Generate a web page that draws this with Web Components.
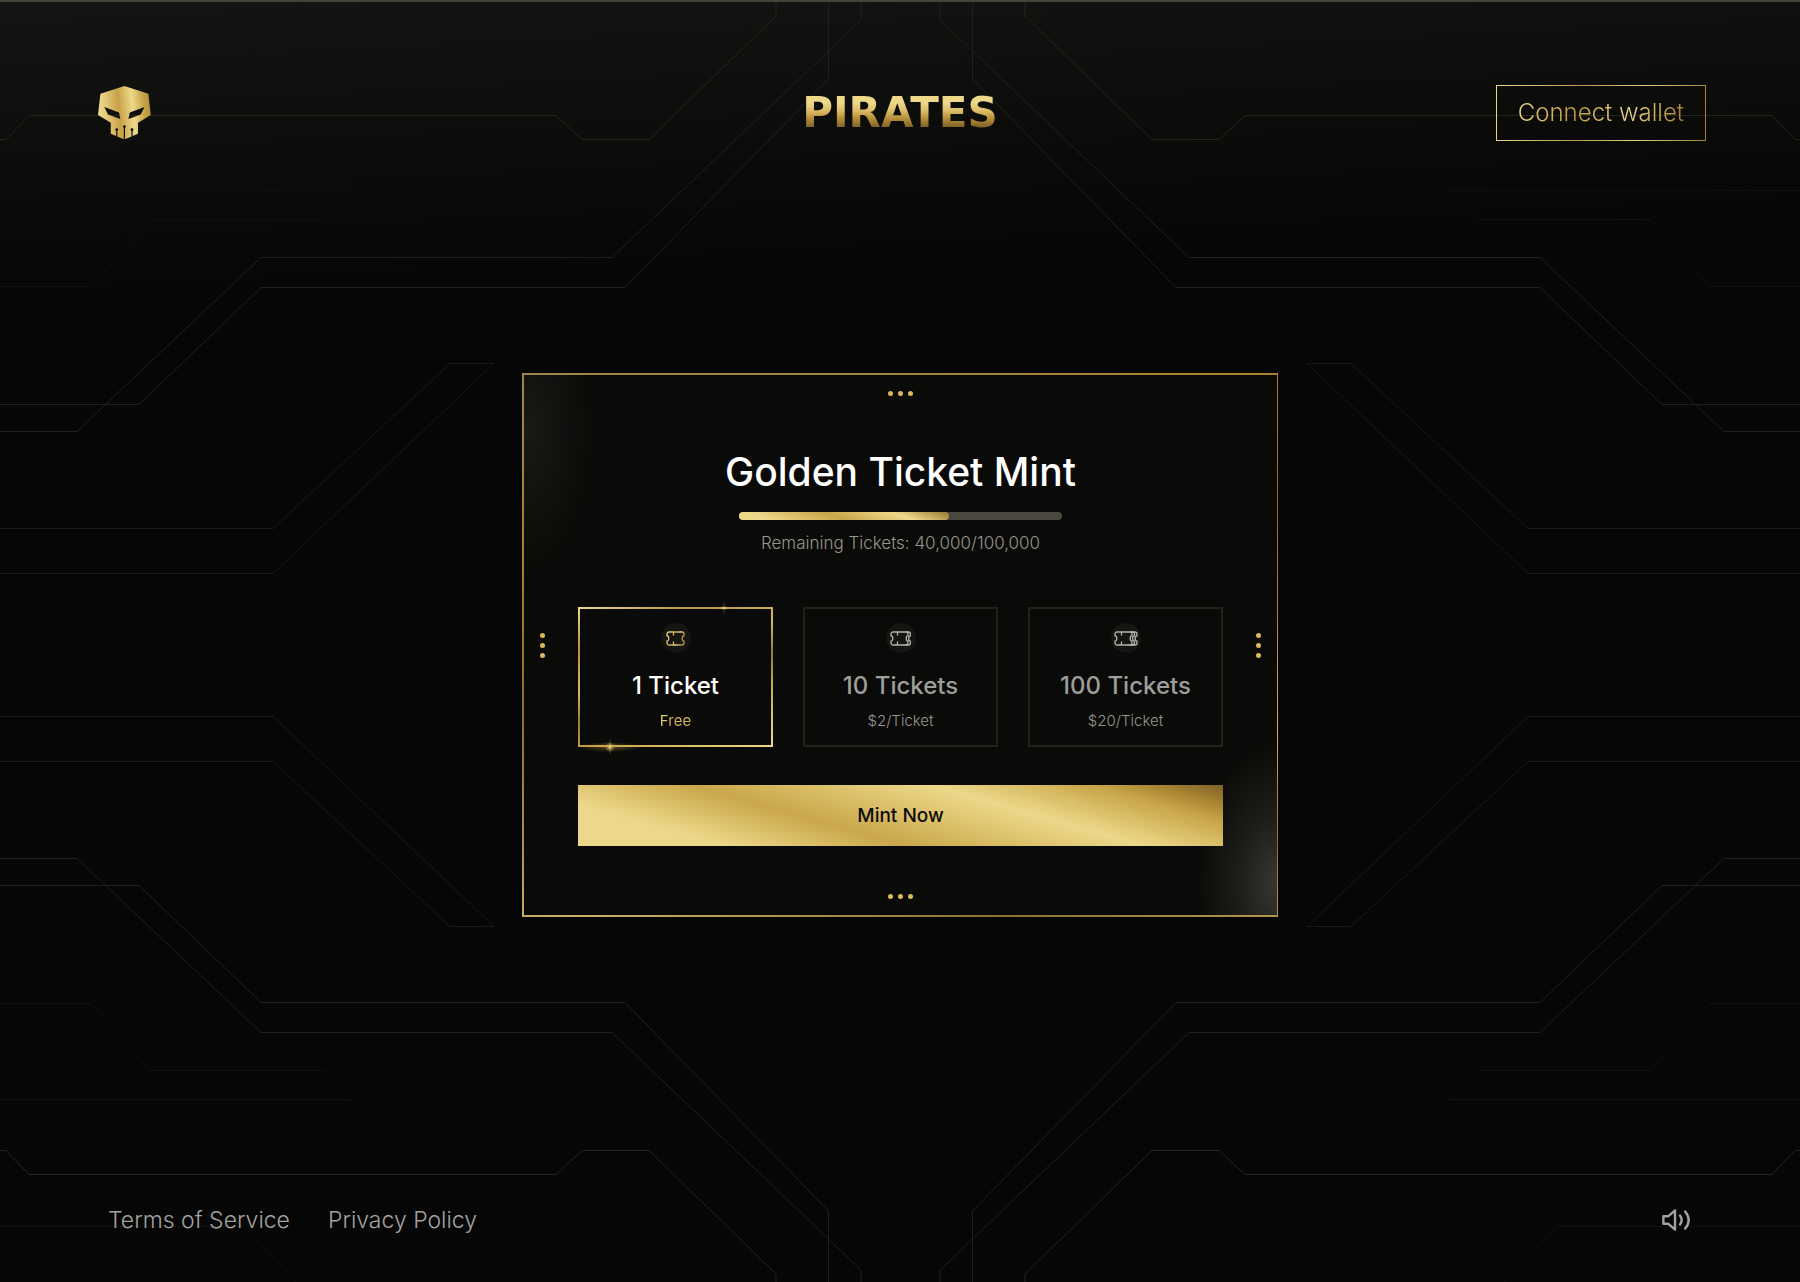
<!DOCTYPE html>
<html lang="en">
<head>
    <meta charset="UTF-8">
    <meta name="viewport" content="width=device-width, initial-scale=1">
    <title>Pirates - Golden Ticket Mint</title>
    <style>
        :root {
            --muted: #96958f;
            --gold-text: linear-gradient(100deg, #eed98b 0%, #c09a40 35%, #eed98b 65%, #a27e30 100%);
        }
        body {
            margin: 0;
            background: #060606;
            color: #fff;
            font-family: Inter, "Liberation Sans", sans-serif;
        }
    </style>
</head>
<body>

<mint-page>
    <site-header slot="header"></site-header>
    <mint-card heading="Golden Ticket Mint" sold="65">
        <span slot="remaining">Remaining Tickets: 40,000/100,000</span>
        <ticket-option name="1 Ticket" price="Free" edges="0" selected></ticket-option>
        <ticket-option name="10 Tickets" price="$2/Ticket" edges="1"></ticket-option>
        <ticket-option name="100 Tickets" price="$20/Ticket" edges="2"></ticket-option>
    </mint-card>
    <site-footer slot="footer"></site-footer>
</mint-page>

<script>
    class CircuitLines extends HTMLElement {

        constructor() {
            super();
            this._shadow = this.attachShadow({mode: "open"});
        }

        connectedCallback() {
            // one quarter is drawn, the other three are mirrored from it
            this._shadow.innerHTML = `
                <svg viewBox="0 0 1800 1282" preserveAspectRatio="xMidYMid slice" aria-hidden="true">
                    <defs>
                        <g id="quarter" fill="none">
                            <path stroke="#242421" d="M0 139.5H6L29 115.5H556L582 139.5H649L776 16V2"/>
                            <path stroke="#20201e" d="M0 431.5H77L261 257.5H612L861 20V2"/>
                            <path stroke="#20201e" d="M0 404.5H139L261 287.5H625L828.5 79V2"/>
                            <path stroke="#191917" d="M0 528.5H273L450 363.5H494L273 573.5H0"/>
                            <path stroke="#10100f" d="M0 190.5H354L323 219.5H150L92 286.5H0M0 63.5H244L302 2"/>
                        </g>
                        <g id="half">
                            <use href="#quarter"/>
                            <use href="#quarter" transform="matrix(-1 0 0 1 1801 0)"/>
                        </g>
                    </defs>
                    <use href="#half"/>
                    <use href="#half" transform="matrix(1 0 0 -1 0 1290)"/>
                </svg>

                <style>
                    :host {
                        display: block;
                        overflow: hidden;
                    }
                    svg {
                        display: block;
                        width: 100%;
                        height: 100%;
                    }
                </style>
            `;
        }
    }

    class MintPage extends HTMLElement {

        constructor() {
            super();
            this._shadow = this.attachShadow({mode: "open"});
        }

        connectedCallback() {
            this._shadow.innerHTML = `
                <circuit-lines></circuit-lines>
                <slot name="header"></slot>
                <main><slot></slot></main>
                <slot name="footer"></slot>

                <style>
                    :host {
                        display: grid;
                        grid-template-rows: 1fr auto 1fr;
                        position: relative;
                        box-sizing: border-box;
                        min-height: 100vh;
                        padding-top: 6px;
                        border-top: 2px solid #45443a;
                        background: linear-gradient(177deg, #141412 0, #0e0e0c 130px, #090908 240px, #060606 310px);
                    }
                    circuit-lines {
                        position: absolute;
                        inset: -2px 0 0;
                    }
                    main {
                        position: relative;
                        display: flex;
                        justify-content: center;
                        padding: 0 24px;
                    }
                    ::slotted(*) {
                        position: relative;
                    }
                </style>
            `;
        }
    }

    class SiteHeader extends HTMLElement {

        constructor() {
            super();
            this._shadow = this.attachShadow({mode: "open"});
        }

        connectedCallback() {
            this._shadow.innerHTML = `
                <header>
                    <a class="skull" href="#" aria-label="Home">
                        <svg width="60" height="60" viewBox="14 13 60 60">
                            <defs>
                                <linearGradient id="skull" x1="0" y1="0.1" x2="1" y2="0">
                                    <stop offset="0" stop-color="#eed98b"/>
                                    <stop offset="0.1" stop-color="#e6cd7e"/>
                                    <stop offset="0.36" stop-color="#c6a146"/>
                                    <stop offset="0.62" stop-color="#eed98b"/>
                                    <stop offset="0.82" stop-color="#caa74a"/>
                                    <stop offset="1" stop-color="#a98433"/>
                                </linearGradient>
                            </defs>
                            <path fill="url(#skull)" fill-rule="evenodd" d="M44.4 16L68.4 23.7L70.8 45L58 52.8V63.8L44.4 69.6L30.8 63.8V52.8L18 45L20.4 23.7Z
                                M24.3 37L28 44.6L40.4 49L39 42.4ZM64.5 37L60.8 44.6L48.4 49L49.8 42.4Z"/>
                            <path stroke="#0e0e0c" stroke-width="1.2" d="M36.8 60V67.5M44.4 57V70M52 60V67.5"/>
                            <g fill="#0e0e0c">
                                <circle cx="36.8" cy="59.6" r="1.4"/>
                                <circle cx="44.4" cy="56.6" r="1.4"/>
                                <circle cx="52" cy="59.6" r="1.4"/>
                            </g>
                        </svg>
                    </a>
                    <span class="brand">PIRATES</span>
                    <button><span>Connect wallet</span></button>
                </header>

                <style>
                    :host {
                        display: block;
                        padding: 75px 94px 0;
                    }
                    header {
                        display: grid;
                        grid-template-columns: 1fr auto 1fr;
                        align-items: center;
                    }
                    .skull {
                        justify-self: start;
                    }
                    svg {
                        display: block;
                    }
                    .brand {
                        font: bold 42px/42px "DejaVu Sans", sans-serif;
                        background: linear-gradient(#eed98b 25%, #dcbc68 45%, #b8913a 62%, #7a5f28 85%);
                        -webkit-background-clip: text;
                        background-clip: text;
                        color: transparent;
                    }
                    button {
                        justify-self: end;
                        padding: 12px 21px;
                        border: 1px solid;
                        border-image: linear-gradient(100deg, #eed98b, #c09a40 40%, #e6cd7e 68%, #a27e30) 1;
                        background: none;
                        font: 300 24px/30px Inter, "Liberation Sans", sans-serif;
                        cursor: pointer;
                    }
                    button span {
                        background: var(--gold-text);
                        -webkit-background-clip: text;
                        background-clip: text;
                        color: transparent;
                    }
                </style>
            `;
        }
    }

    class DotRow extends HTMLElement {

        constructor() {
            super();
            this._shadow = this.attachShadow({mode: "open"});
        }

        connectedCallback() {
            this._shadow.innerHTML = `
                <i></i><i></i><i></i>

                <style>
                    :host {
                        display: flex;
                        justify-content: center;
                        gap: 5px;
                    }
                    :host([vertical]) {
                        flex-direction: column;
                    }
                    i {
                        width: 5px;
                        height: 5px;
                        border-radius: 50%;
                        background: #dcb95e;
                    }
                </style>
            `;
        }
    }

    class MintCard extends HTMLElement {

        constructor() {
            super();
            this._shadow = this.attachShadow({mode: "open"});
        }

        connectedCallback() {
            this._shadow.innerHTML = `
                <dot-row class="wide"></dot-row>
                <dot-row vertical></dot-row>
                <section>
                    <h1>${this.getAttribute("heading")}</h1>
                    <progress max="100" value="${this.getAttribute("sold")}" aria-labelledby="remaining"></progress>
                    <p id="remaining"><slot name="remaining"></slot></p>
                    <div class="options"><slot></slot></div>
                    <button>Mint Now</button>
                </section>
                <dot-row vertical></dot-row>
                <dot-row class="wide"></dot-row>

                <style>
                    :host {
                        display: grid;
                        grid-template-columns: 5px 1fr 5px;
                        column-gap: 33px;
                        box-sizing: border-box;
                        width: 100%;
                        max-width: 756px;
                        padding: 16px;
                        border: 2px solid;
                        border-right-width: 1px;
                        border-image: linear-gradient(165deg, #9c8650 0%, #a8832f 25%, #8c6d2c 45%, #a38a4c 60%, #cdb066 75%, #8c7038 90%, #b3964e 100%) 2;
                        background:
                            radial-gradient(70px 140px at 0 55px, #191916, #11110f 55%, #0a0a0800),
                            radial-gradient(80px 140px at 100% 94%, #38362f, #1d1c18 50%, #0a0a0800),
                            #0a0a08;
                    }
                    .wide {
                        grid-column: 1 / -1;
                    }
                    section {
                        display: flex;
                        flex-direction: column;
                        align-items: center;
                        padding: 52px 0 48px;
                    }
                    h1 {
                        margin: 0;
                        font-size: 39px;
                        line-height: 48px;
                        font-weight: 500;
                    }
                    progress {
                        appearance: none;
                        -webkit-appearance: none;
                        display: block;
                        width: 50%;
                        height: 8px;
                        margin: 16px 0 12px;
                        border: none;
                        border-radius: 4px;
                        overflow: hidden;
                        background: #4b493f;
                    }
                    progress::-webkit-progress-bar {
                        background: #4b493f;
                    }
                    progress::-webkit-progress-value {
                        border-radius: 0 4px 4px 0;
                        background: linear-gradient(20deg, #eed98b 12%, #c9a648 46%, #eed98b 75%, #9a7a30 100%);
                    }
                    p {
                        margin: 0;
                        font-size: 17px;
                        line-height: 22px;
                        font-weight: 300;
                        color: var(--muted);
                    }
                    .options {
                        display: grid;
                        grid-template-columns: repeat(3, 1fr);
                        gap: 30px;
                        align-self: stretch;
                        margin: 53px 0 38px;
                    }
                    button {
                        align-self: stretch;
                        height: 61px;
                        border: none;
                        background: linear-gradient(16deg, #ecd88a 17%, #caa74a 38%, #ecd88a 66%, #caa74a 84%, #a98433 92%, #7d6128 100%);
                        color: #0c0c0a;
                        font: 500 19px/24px Inter, "Liberation Sans", sans-serif;
                        cursor: pointer;
                    }
                </style>
            `;
        }
    }

    class TicketOption extends HTMLElement {

        constructor() {
            super();
            this._shadow = this.attachShadow({mode: "open"});
        }

        connectedCallback() {
            const selected = this.hasAttribute("selected");
            const edges = Number(this.getAttribute("edges"));
            const width = 19 + edges * 2.5;

            // every extra edge is one more ticket behind the first
            let stack = "";
            for (let i = 1; i <= edges; i++) {
                stack += `<path transform="translate(${i * 2.5})" d="M13 1h3a2 2 0 0 1 2 2v1.9a1.8 2.6 0 0 0 0 5.2v1.9a2 2 0 0 1-2 2h-3"/>`;
            }

            this._shadow.innerHTML = `
                <button aria-pressed="${selected}">
                    <span class="icon">
                        <svg width="${width}" height="15" viewBox="0 0 ${width} 15" aria-hidden="true">
                            <defs>
                                <linearGradient id="gold" x1="0" y1="0" x2="1" y2="0.3">
                                    <stop offset="0" stop-color="#eed98b"/>
                                    <stop offset="0.5" stop-color="#caa74a"/>
                                    <stop offset="0.7" stop-color="#eed98b"/>
                                    <stop offset="1" stop-color="#b8913a"/>
                                </linearGradient>
                            </defs>
                            <g fill="none" stroke="${selected ? "url(#gold)" : "#b4b3ad"}" stroke-width="1.3">
                                <path d="M3 1h13a2 2 0 0 1 2 2v1.9a1.8 2.6 0 0 0 0 5.2v1.9a2 2 0 0 1-2 2h-13a2 2 0 0 1-2-2v-1.9a1.8 2.6 0 0 0 0-5.2v-1.9a2 2 0 0 1 2-2z"/>
                                <path stroke="${selected ? "#dcb95e" : "#b4b3ad"}" d="M7.5 1v3.5M7.5 10.5v3.5"/>
                                ${stack}
                            </g>
                        </svg>
                    </span>
                    <span class="name">${this.getAttribute("name")}</span>
                    <span class="price">${this.getAttribute("price")}</span>
                </button>
                ${selected ? `<i class="glint top"></i><i class="glint bottom"></i>` : ""}

                <style>
                    :host {
                        display: block;
                        position: relative;
                    }
                    button {
                        display: flex;
                        flex-direction: column;
                        align-items: center;
                        box-sizing: border-box;
                        width: 100%;
                        height: 140px;
                        padding: 14px 0 0;
                        border: 2px solid #20201d;
                        background: none;
                        color: #9d9d9b;
                        font-family: inherit;
                        cursor: pointer;
                    }
                    :host([selected]) button {
                        border-image: linear-gradient(160deg, #eed98b 0%, #b8913a 20%, #d9b860 40%, #9a7a30 55%, #caa74a 70%, #eed98b 100%) 2;
                        color: #fff;
                    }
                    .icon {
                        display: grid;
                        place-items: center;
                        width: 30px;
                        height: 30px;
                        border-radius: 50%;
                        background: #151513;
                    }
                    .name {
                        margin: 18px 0 10px;
                        font-size: 24px;
                        line-height: 30px;
                        font-weight: 500;
                    }
                    .price {
                        font-size: 15px;
                        line-height: 20px;
                        font-weight: 300;
                        color: var(--muted);
                    }
                    :host([selected]) .price {
                        font-weight: 400;
                        background: linear-gradient(100deg, #eed98b, #caa74a 45%, #e0c473 70%, #caa74a);
                        -webkit-background-clip: text;
                        background-clip: text;
                        color: transparent;
                    }
                    .glint {
                        position: absolute;
                        pointer-events: none;
                    }
                    .top {
                        left: 72%;
                        top: -8px;
                        width: 12px;
                        height: 18px;
                        background:
                            radial-gradient(1px 9px, #eed98b55, transparent),
                            radial-gradient(5px 2px, #fff2c088, transparent);
                    }
                    .bottom {
                        left: 0;
                        bottom: -10px;
                        width: 64px;
                        height: 20px;
                        background:
                            radial-gradient(5px 5px, #eed98b, #caa74a88 50%, transparent),
                            radial-gradient(1px 10px, #eed98b66, transparent),
                            radial-gradient(32px 5px, #caa74a66, transparent);
                    }
                </style>
            `;
        }
    }

    class SiteFooter extends HTMLElement {

        constructor() {
            super();
            this._shadow = this.attachShadow({mode: "open"});
        }

        connectedCallback() {
            this._shadow.innerHTML = `
                <footer>
                    <nav>
                        <a href="#terms">Terms of Service</a>
                        <a href="#privacy">Privacy Policy</a>
                    </nav>
                    <button aria-label="Sound">
                        <svg width="30" height="30" viewBox="0 0 30 30" fill="none" stroke="#a3a29e" stroke-width="2.4" stroke-linejoin="round" stroke-linecap="round">
                            <path d="M1.4 11.2h5l6.6-5.8v19.2l-6.6-5.8h-5z"/>
                            <path d="M18 10.6q3.4 4.4 0 8.8M23.2 6.4q7 8.6 0 17.2"/>
                        </svg>
                    </button>
                </footer>

                <style>
                    :host {
                        display: flex;
                        flex-direction: column;
                        justify-content: flex-end;
                        padding: 0 108px 47px;
                    }
                    footer {
                        display: flex;
                        justify-content: space-between;
                        align-items: center;
                    }
                    nav {
                        display: flex;
                        gap: 38px;
                    }
                    a {
                        color: #a3a29e;
                        font-size: 23px;
                        line-height: 30px;
                        font-weight: 300;
                        text-decoration: none;
                    }
                    button {
                        padding: 0;
                        border: none;
                        background: none;
                        cursor: pointer;
                    }
                    svg {
                        display: block;
                    }
                </style>
            `;
        }
    }

    customElements.define("circuit-lines", CircuitLines);
    customElements.define("dot-row", DotRow);
    customElements.define("site-header", SiteHeader);
    customElements.define("ticket-option", TicketOption);
    customElements.define("mint-card", MintCard);
    customElements.define("site-footer", SiteFooter);
    customElements.define("mint-page", MintPage);
</script>
</body>
</html>
